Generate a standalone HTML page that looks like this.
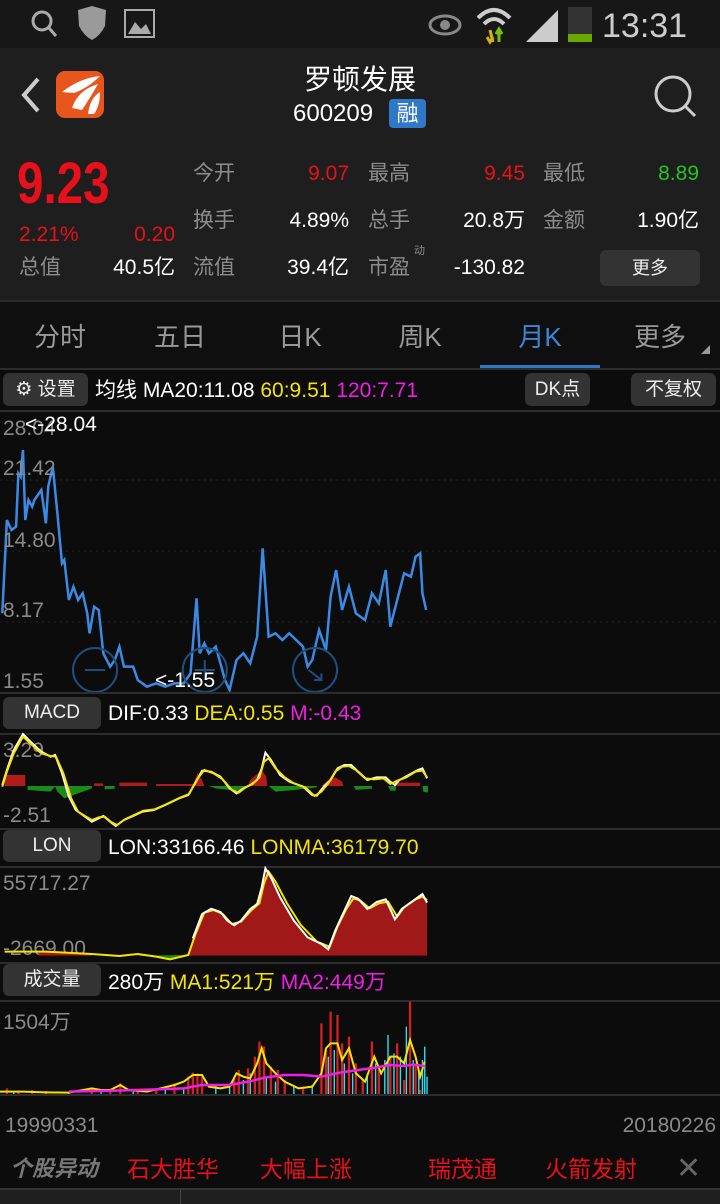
<!DOCTYPE html>
<html><head><meta charset="utf-8"><style>
*{margin:0;padding:0;box-sizing:border-box}
body{width:720px;height:1204px;background:#0c0c0c;font-family:"Liberation Sans","Noto Sans CJK SC",sans-serif;position:relative;overflow:hidden;color:#fff}
.a{position:absolute;white-space:nowrap;line-height:26px}
.g{color:#8c8c8c}.r{color:#e8101a}.gr{color:#22c422}.y{color:#f5e400}.m{color:#f01ee6}
.btn{position:absolute;background:#333;border-radius:6px;color:#eee;font-size:19px;text-align:center}
.hl{position:absolute;left:0;width:720px;height:2px;background:#2c2c2c}
.lab{position:absolute;font-size:21px;color:#8a8a8a;white-space:nowrap;line-height:26px}
</style></head><body>
<div class="a" style="left:0;top:0;width:720px;height:48px;background:#171717"></div>
<div class="a" style="left:0;top:48px;width:720px;height:252px;background:#1e1e1e"></div>
<svg class="a" style="left:0;top:0" width="720" height="48">
<circle cx="42" cy="21" r="9" fill="none" stroke="#aaa" stroke-width="3"/><line x1="49" y1="28" x2="56" y2="36" stroke="#aaa" stroke-width="3"/>
<path d="M78 10 L92 6 L106 10 L105 26 Q100 36 92 40 Q84 36 79 26Z" fill="#9a9a9a"/>
<rect x="125" y="10" width="29" height="27" fill="none" stroke="#aaa" stroke-width="2"/><path d="M128 34 L135 22 L141 29 L146 24 L151 34Z" fill="#aaa"/>
<ellipse cx="445" cy="25" rx="15" ry="9" fill="none" stroke="#888" stroke-width="3"/><circle cx="445" cy="25" r="5" fill="#888"/>
<path d="M478 18 Q494 2 510 18" fill="none" stroke="#ccc" stroke-width="4"/><path d="M484 24 Q494 14 504 24" fill="none" stroke="#ccc" stroke-width="4"/>
<path d="M490 30 L493 42 M487 37 L490 42 L493 37" stroke="#d4b400" stroke-width="3" fill="none"/><path d="M499 42 L499 30 M496 34 L499 29 L502 34" stroke="#7ac000" stroke-width="3" fill="none"/>
<path d="M526 42 L558 10 L558 42Z" fill="#ccc"/>
<rect x="568" y="7" width="24" height="35" fill="#333"/><rect x="568" y="34" width="24" height="8" fill="#6aa800"/>
<text x="602" y="37" font-size="34" fill="#ccc" font-family="Liberation Sans">13:31</text>
</svg>
<svg class="a" style="left:0;top:48px" width="720" height="80">
<path d="M38 31 L24 47 L38 63" fill="none" stroke="#ccc" stroke-width="4"/>
<rect x="56" y="23" width="48" height="47" rx="9" fill="#e8561e"/>
<path d="M62 44 Q80 30 100 28 Q88 40 74 45Z M72 60 Q78 42 98 36 Q90 50 82 62Z M88 66 Q90 50 100 44 Q100 58 94 66Z" fill="#fff"/>
<circle cx="673" cy="46" r="17" fill="none" stroke="#ccc" stroke-width="3"/><line x1="685" y1="58" x2="695" y2="68" stroke="#ccc" stroke-width="3"/>
</svg>
<div class="a" style="left:0;width:720px;text-align:center;top:64px;font-size:28px;line-height:32px">罗顿发展</div>
<div class="a" style="left:293px;top:101px;font-size:24px">600209</div>
<div class="a" style="left:389px;top:99px;width:37px;height:29px;background:#2f78c8;border-radius:4px;font-size:22px;text-align:center;line-height:29px">融</div>
<div class="a r" style="left:17px;top:154px;font-size:58px;line-height:60px;font-weight:bold;transform:scaleX(.82);transform-origin:left">9.23</div>
<div class="a r" style="left:19px;top:222px;font-size:21px">2.21%</div>
<div class="a r" style="right:545px;top:222px;font-size:21px">0.20</div>
<div class="a g" style="left:19px;top:255px;font-size:21px">总值</div>
<div class="a" style="right:545px;top:255px;font-size:21px">40.5亿</div>
<div class="a g" style="left:193px;top:161px;font-size:21px">今开</div>
<div class="a r" style="right:371px;top:161px;font-size:21px">9.07</div>
<div class="a g" style="left:368px;top:161px;font-size:21px">最高</div>
<div class="a r" style="right:195px;top:161px;font-size:21px">9.45</div>
<div class="a g" style="left:543px;top:161px;font-size:21px">最低</div>
<div class="a gr" style="right:21px;top:161px;font-size:21px">8.89</div>
<div class="a g" style="left:193px;top:208px;font-size:21px">换手</div>
<div class="a" style="right:371px;top:208px;font-size:21px">4.89%</div>
<div class="a g" style="left:368px;top:208px;font-size:21px">总手</div>
<div class="a" style="right:195px;top:208px;font-size:21px">20.8万</div>
<div class="a g" style="left:543px;top:208px;font-size:21px">金额</div>
<div class="a" style="right:21px;top:208px;font-size:21px">1.90亿</div>
<div class="a g" style="left:193px;top:255px;font-size:21px">流值</div>
<div class="a" style="right:371px;top:255px;font-size:21px">39.4亿</div>
<div class="a g" style="left:368px;top:255px;font-size:21px">市盈</div>
<div class="a g" style="left:414px;top:245px;font-size:11px;line-height:12px">动</div>
<div class="a" style="right:195px;top:255px;font-size:21px">-130.82</div>
<div class="btn" style="left:600px;top:250px;width:100px;height:36px;line-height:36px;font-size:18px">更多</div>
<div class="a" style="left:0;top:300px;width:720px;height:68px;background:#0f0f0f"></div>
<div class="a" style="left:0;top:300px;width:720px;height:2px;background:#2a2a2a"></div>
<div class="a" style="left:0;width:120px;text-align:center;top:322px;font-size:26px;line-height:30px;color:#999">分时</div>
<div class="a" style="left:120px;width:120px;text-align:center;top:322px;font-size:26px;line-height:30px;color:#999">五日</div>
<div class="a" style="left:240px;width:120px;text-align:center;top:322px;font-size:26px;line-height:30px;color:#999">日K</div>
<div class="a" style="left:360px;width:120px;text-align:center;top:322px;font-size:26px;line-height:30px;color:#999">周K</div>
<div class="a" style="left:480px;width:120px;text-align:center;top:322px;font-size:26px;line-height:30px;color:#3a86d8">月K</div>
<div class="a" style="left:600px;width:120px;text-align:center;top:322px;font-size:26px;line-height:30px;color:#999">更多</div>
<svg class="a" style="left:700px;top:344px" width="12" height="12"><path d="M10 1 L10 10 L1 10Z" fill="#999"/></svg>
<div class="a" style="left:480px;top:365px;width:120px;height:4px;background:#2f78c8"></div>
<div class="hl" style="top:368px"></div>
<div class="btn" style="left:3px;top:373px;width:85px;height:33px;line-height:33px">⚙ 设置</div>
<div class="a" style="left:95px;top:378px;font-size:21px">均线 MA20:11.08 <span class="y">60:9.51</span> <span class="m">120:7.71</span></div>
<div class="btn" style="left:525px;top:373px;width:65px;height:33px;line-height:33px">DK点</div>
<div class="btn" style="left:631px;top:373px;width:85px;height:33px;line-height:33px">不复权</div>
<div class="hl" style="top:410px"></div>
<svg class="a" style="left:0;top:300px" width="720" height="400" viewBox="0 0 1568 1200" preserveAspectRatio="none">
<g stroke="#262626" stroke-dasharray="2 4" stroke-width="1">
<line x1="0" y1="540" x2="1568" y2="540" vector-effect="non-scaling-stroke"/><line x1="0" y1="753" x2="1568" y2="753" vector-effect="non-scaling-stroke"/><line x1="0" y1="966" x2="1568" y2="966" vector-effect="non-scaling-stroke"/></g>
<polyline fill="none" stroke="#3a8ae6" stroke-width="2.5" vector-effect="non-scaling-stroke" points="5,940 15,660 25,690 35,680 40,520 45,530 50,450 55,660 62,600 70,620 75,600 85,580 90,570 100,670 105,560 115,500 125,640 135,790 140,780 150,900 160,860 170,900 180,880 190,940 195,1000 205,920 215,930 225,1060 240,1100 250,1080 260,1040 270,1100 290,1100 300,1140 320,1160 340,1150 360,1160 380,1150 400,1150 415,1120 428,895 435,1060 445,1030 455,1060 470,1040 480,1090 490,1140 500,1170 515,1080 530,1060 545,1090 560,1010 572,745 585,1010 600,1000 615,1020 630,1000 645,1020 660,1040 670,1100 680,1080 695,990 710,1050 720,890 732,810 745,930 760,860 775,940 795,960 810,880 825,910 840,810 850,980 865,900 880,820 895,830 905,770 915,760 920,880 928,930"/>
<g fill="none" stroke="#1d4f80" stroke-width="2">
<ellipse cx="207" cy="1110" rx="48" ry="66" vector-effect="non-scaling-stroke"/><ellipse cx="446" cy="1110" rx="48" ry="66" vector-effect="non-scaling-stroke"/><ellipse cx="686" cy="1110" rx="48" ry="66" vector-effect="non-scaling-stroke"/>
<line x1="185" y1="1110" x2="229" y2="1110" vector-effect="non-scaling-stroke"/><line x1="424" y1="1110" x2="468" y2="1110" vector-effect="non-scaling-stroke"/><line x1="446" y1="1080" x2="446" y2="1140" vector-effect="non-scaling-stroke"/><path d="M672 1110 L700 1140 M700 1120 L700 1140 L684 1140" vector-effect="non-scaling-stroke"/></g>
</svg>
<div class="lab" style="left:3px;top:416px">28.04</div>
<div class="lab" style="left:3px;top:456px">21.42</div>
<div class="lab" style="left:3px;top:528px">14.80</div>
<div class="lab" style="left:3px;top:598px">8.17</div>
<div class="lab" style="left:3px;top:669px">1.55</div>
<div class="a" style="left:25px;top:412px;font-size:21px">&lt;-28.04</div>
<div class="a" style="left:155px;top:668px;font-size:21px">&lt;-1.55</div>
<div class="hl" style="top:692px"></div>
<div class="btn" style="left:3px;top:697px;width:98px;height:32px;line-height:32px">MACD</div>
<div class="a" style="left:108px;top:701px;font-size:21px">DIF:0.33 <span class="y">DEA:0.55</span> <span class="m">M:-0.43</span></div>
<div class="hl" style="top:733px"></div>
<div class="lab" style="left:3px;top:738px">3.29</div>
<div class="lab" style="left:3px;top:803px">-2.51</div>
<div class="hl" style="top:828px"></div>
<div class="btn" style="left:3px;top:830px;width:98px;height:32px;line-height:32px">LON</div>
<div class="a" style="left:108px;top:835px;font-size:21px">LON:33166.46 <span class="y">LONMA:36179.70</span></div>
<div class="hl" style="top:866px"></div>
<div class="lab" style="left:3px;top:871px">55717.27</div>
<div class="lab" style="left:3px;top:936px">-2669.00</div>
<div class="hl" style="top:962px"></div>
<div class="btn" style="left:3px;top:964px;width:98px;height:32px;line-height:32px">成交量</div>
<div class="a" style="left:108px;top:970px;font-size:21px">280万 <span class="y">MA1:521万</span> <span class="m">MA2:449万</span></div>
<div class="hl" style="top:1000px"></div>
<div class="lab" style="left:3px;top:1010px">1504万</div>
<svg class="a" style="left:0;top:690px" width="720" height="410" viewBox="0 0 1568 1230" preserveAspectRatio="none">
<path fill="#b01c1c" d="M10 288 L10 255 L55 255 L55 288Z M260 288 L260 278 L320 278 L320 288Z M340 288 L340 282 L420 282 L420 288Z M420 288 L430 250 L440 270 L445 288Z M540 288 L545 270 L570 240 L580 260 L582 288Z M700 288 L715 270 L730 262 L745 275 L748 288Z M205 288 L205 280 L225 280 L225 288Z M860 288 L860 278 L915 278 L915 288Z"/>
<path fill="#1a8a1a" d="M60 288 L60 300 L110 305 L120 290 L125 305 L140 325 L160 315 L200 295 L200 288Z M228 288 L228 298 L250 296 L250 288Z M455 288 L470 295 L500 300 L520 302 L540 288Z M585 288 L600 305 L640 300 L690 292 L690 288Z M770 288 L775 300 L810 296 L810 288Z M845 288 L850 302 L862 302 L862 288Z M920 288 L922 305 L932 308 L932 288Z"/>
<polyline fill="none" stroke="#fff" stroke-width="2" vector-effect="non-scaling-stroke" points="5,285 15,240 30,180 50,132 70,160 90,185 110,200 120,195 135,250 150,320 165,360 180,375 200,395 215,385 225,378 240,395 252,408 270,390 290,378 310,365 335,360 360,345 390,325 410,315 425,280 440,242 460,245 480,260 500,295 515,310 530,295 545,285 560,270 570,235 578,188 590,210 610,255 630,275 660,290 680,315 690,317 705,290 720,270 735,235 750,225 765,225 780,245 800,270 820,262 840,262 850,275 860,285 870,270 890,255 910,240 920,235 930,265"/>
<polyline fill="none" stroke="#f5e400" stroke-width="2" vector-effect="non-scaling-stroke" points="5,290 15,245 30,190 50,140 70,165 90,190 110,198 122,200 138,250 155,325 170,365 185,378 200,390 215,382 228,380 242,396 255,405 272,388 292,375 312,362 337,358 362,343 392,323 412,312 428,270 445,240 465,250 485,268 505,300 520,308 535,292 550,282 565,262 575,215 585,205 600,235 620,262 640,280 665,292 685,318 700,305 715,280 730,245 745,230 760,228 775,240 795,265 815,268 835,265 850,282 865,272 885,262 905,245 920,242 930,262"/>
<path fill="#a01818" d="M410 797 L420 740 L440 670 L460 655 L480 665 L495 690 L510 705 L525 690 L545 655 L560 640 L570 590 L578 535 L590 560 L610 620 L640 690 L670 740 L700 760 L715 775 L730 720 L750 660 L765 620 L780 625 L800 655 L820 635 L840 630 L860 685 L875 655 L900 630 L920 615 L930 635 L930 797Z M85 797 L85 782 L200 790 L200 797Z"/>
<path fill="#1a8a1a" d="M300 797 L330 800 L370 810 L400 795Z"/>
<polyline fill="none" stroke="#f5e400" stroke-width="2" vector-effect="non-scaling-stroke" points="10,785 100,785 200,792 260,798 300,792 340,800 370,808 410,795 425,735 445,668 465,660 485,672 505,702 525,695 548,660 565,640 575,580 585,545 600,575 625,640 655,705 690,755 718,770 735,710 755,655 770,625 785,632 805,655 825,640 845,635 865,680 880,652 905,628 920,620 930,630"/>
<polyline fill="none" stroke="#fff" stroke-width="2" vector-effect="non-scaling-stroke" points="420,745 440,672 460,656 480,666 495,692 510,706 525,692 545,657 560,642 570,592 578,535 590,562 610,622 640,692 670,742 700,762 715,778 730,722 750,662 765,618 780,626 800,657 820,636 840,628 860,688 875,657 900,632 920,612 930,638"/>
<g stroke="#d42020" stroke-width="5">
<path d="M15 1212V1195M40 1212V1202M70 1212V1200M100 1212V1203M200 1212V1195M240 1212V1198M262 1212V1180M300 1212V1200M340 1212V1195M380 1212V1180M410 1212V1160M420 1212V1148M430 1212V1150M440 1212V1160M510 1212V1160M520 1212V1140M540 1212V1135M555 1212V1100M565 1212V1055M575 1212V1070M590 1212V1130M605 1212V1140M620 1212V1170M660 1212V1190M700 1212V1000M710 1212V1080M720 1212V965M735 1212V975M745 1212V1060M760 1212V1040M775 1212V1120M790 1212V1170M810 1212V1055M825 1212V1140M850 1212V1100M865 1212V1060M880 1212V1170M893 1212V935M905 1212V1120M915 1212V1200"/></g>
<g stroke="#2ee0f0" stroke-width="3">
<path d="M30 1212V1205M150 1212V1205M220 1212V1203M290 1212V1205M360 1212V1200M400 1212V1195M470 1212V1185M500 1212V1180M530 1212V1170M545 1212V1150M580 1212V1160M600 1212V1175M640 1212V1190M680 1212V1185M715 1212V1100M728 1212V1080M750 1212V1120M768 1212V1150M800 1212V1150M818 1212V1120M838 1212V1110M845 1212V1035M858 1212V1090M872 1212V1100M885 1212V1010M900 1212V1110M912 1212V1140M920 1212V1110M925 1212V1070M930 1212V1160"/></g>
<polyline fill="none" stroke="#f5e400" stroke-width="2" vector-effect="non-scaling-stroke" points="0,1205 50,1205 100,1207 150,1208 200,1195 220,1200 240,1200 262,1185 280,1200 320,1205 350,1195 380,1185 400,1175 420,1155 440,1155 455,1190 480,1195 500,1190 515,1150 530,1160 545,1165 560,1120 570,1075 580,1120 600,1150 620,1175 650,1195 680,1190 700,1150 710,1075 720,1060 735,1060 745,1110 760,1075 775,1150 795,1175 815,1100 830,1150 850,1100 865,1100 880,1120 893,1050 905,1100 915,1160 925,1115"/>
<polyline fill="none" stroke="#f01ee6" stroke-width="2.5" vector-effect="non-scaling-stroke" points="150,1205 250,1202 340,1198 400,1195 440,1185 500,1185 540,1175 580,1162 620,1155 660,1155 700,1160 740,1148 780,1140 820,1132 850,1125 880,1128 900,1124 925,1128"/>
</svg>
<div class="hl" style="top:1094px"></div>
<div class="lab" style="left:5px;top:1113px">19990331</div>
<div class="lab" style="right:4px;top:1113px">20180226</div>
<div class="a" style="left:10px;top:1156px;font-size:22px;font-weight:bold;font-style:italic;color:#777">个股异动</div>
<div class="a r" style="left:127px;top:1156px;font-size:23px">石大胜华</div>
<div class="a r" style="left:260px;top:1156px;font-size:23px">大幅上涨</div>
<div class="a r" style="left:428px;top:1156px;font-size:23px">瑞茂通</div>
<div class="a r" style="left:545px;top:1156px;font-size:23px">火箭发射</div>
<div class="a" style="left:676px;top:1153px;font-size:30px;line-height:32px;color:#666">✕</div>
<div class="hl" style="top:1188px;background:#333"></div>
<div class="a" style="left:0;top:1190px;width:720px;height:14px;background:#1f1f1f"></div>
<div class="a" style="left:180px;top:1190px;width:1px;height:14px;background:#444"></div>
</body></html>
